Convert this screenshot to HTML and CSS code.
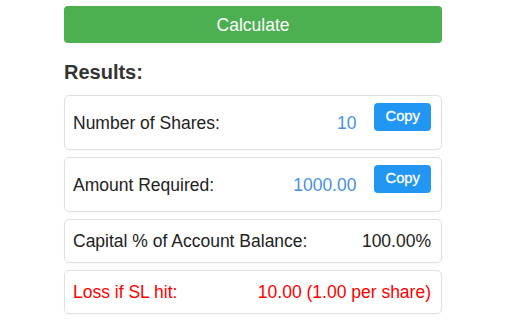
FILE: index.html
```html
<!DOCTYPE html>
<html>
<head>
<meta charset="utf-8">
<link rel="stylesheet" href="styles.css">
</head>
<body>
<div class="wrap">
  <button class="calc">Calculate</button>
  <h3 class="title">Results:</h3>
  <div class="card">
    <span class="label">Number of Shares:</span>
    <div class="right">
      <span class="value blue">10</span>
      <button class="copy">Copy</button>
    </div>
  </div>
  <div class="card">
    <span class="label">Amount Required:</span>
    <div class="right">
      <span class="value blue">1000.00</span>
      <button class="copy">Copy</button>
    </div>
  </div>
  <div class="card">
    <span class="label">Capital % of Account Balance:</span>
    <span class="value">100.00%</span>
  </div>
  <div class="card red">
    <span class="label">Loss if SL hit:</span>
    <span class="value">10.00 (1.00 per share)</span>
  </div>
</div>
</body>
</html>
```
FILE: styles.css
```css
html, body {
  margin: 0;
  padding: 0;
  background: #fff;
}
body {
  font-family: "Liberation Sans", Arial, sans-serif;
  font-size: 17.5px;
  color: #222;
}
.wrap {
  width: 378px;
  margin-left: 64px;
  padding-top: 6px;
}
.calc {
  display: block;
  width: 100%;
  height: 37px;
  border: none;
  border-radius: 4px;
  background: #4caf50;
  color: #fff;
  font-family: inherit;
  font-size: 17.5px;
  padding: 2px 0 0;
}
.title {
  margin: 18px 0 11px;
  font-size: 20px;
  line-height: 23px;
  font-weight: bold;
  color: #333;
}
.card {
  display: flex;
  align-items: center;
  justify-content: space-between;
  border: 1px solid #e0e0e0;
  border-radius: 5px;
  padding: 11px 10px 11px 8px;
  margin-bottom: 7px;
  line-height: 20px;
  box-shadow: 0 1px 2px rgba(0,0,0,0.04);
}
.right {
  display: flex;
  align-items: center;
}
.value.blue {
  color: #4a90e2;
}
.copy {
  height: 28px;
  margin: -4px 0 7px 18px;
  padding: 0 11px 3px;
  border: none;
  border-radius: 4px;
  background: #2196f3;
  color: #fff;
  font-family: inherit;
  font-size: 14.8px;
  font-weight: normal;
  line-height: 20px;
  -webkit-text-stroke: 0.3px #fff;
}
.card.red {
  color: #ff0000;
}
```
